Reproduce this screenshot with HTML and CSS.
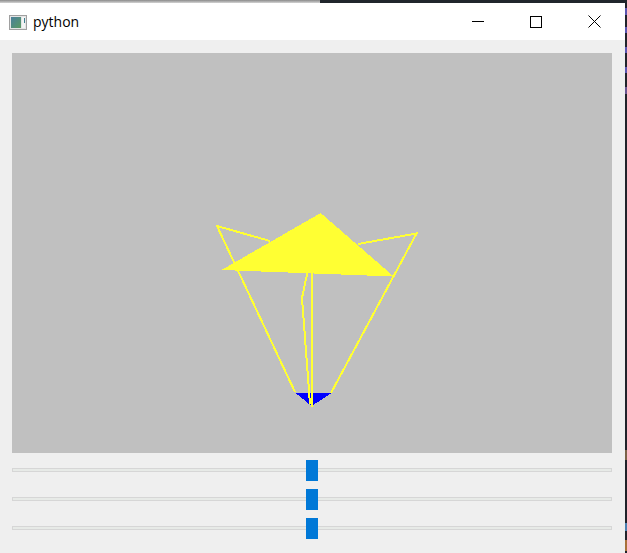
FILE: index.html
```html
<!DOCTYPE html>
<html lang="en">
<head>
<meta charset="utf-8">
<title>python</title>
<link rel="stylesheet" href="styles.css">
</head>
<body>
<div class="desktop-top"><div class="top-light"></div><div class="top-dark"></div></div>
<div class="main">
  <div class="window">
    <header class="titlebar">
      <svg class="app-icon" width="18" height="15" viewBox="0 0 18 15">
        <defs><linearGradient id="g" x1="0" y1="0" x2="1" y2="1"><stop offset="0" stop-color="#4a7f9c"/><stop offset="1" stop-color="#5a9a62"/></linearGradient></defs>
        <rect x="0.5" y="0.5" width="17" height="14" fill="#e4e4e4" stroke="#a0a0a0"/>
        <rect x="2" y="2" width="10" height="11" fill="url(#g)"/>
        <rect x="13" y="2" width="3" height="11" fill="#f2f4f4"/>
        <rect x="15" y="3" width="1" height="5" fill="#3f7f8f"/>
      </svg>
      <span class="title">python</span>
      <div class="controls">
        <div class="ctl"><svg width="12" height="12" viewBox="0 0 12 12"><path d="M0 5.5H12" stroke="#000" fill="none"/></svg></div>
        <div class="ctl"><svg width="12" height="12" viewBox="0 0 12 12"><rect x="0.5" y="0.5" width="11" height="11" stroke="#000" fill="none"/></svg></div>
        <div class="ctl"><svg width="13" height="13" viewBox="0 0 13 13"><path d="M0.5 0.5L12.5 12.5M12.5 0.5L0.5 12.5" stroke="#000" fill="none"/></svg></div>
      </div>
    </header>
    <div class="content">
      <div class="scene">
        <svg class="scene-svg" width="600" height="400" viewBox="12 53 600 400">
          <path class="wire" d="M270 241L217 226L295 392"/>
          <path class="wire" d="M358 244L416.5 233.5L331 393"/>
          <polygon class="blue" points="295,392.5 331,393.5 311.5,406"/>
          <polygon class="fill" points="320.7,213 221.5,270 393.8,276.5"/>
          <path class="wire" d="M307.5 272L302 298L310 404"/>
          <path class="wire" d="M312 272V407"/>
        </svg>
      </div>
      <div class="sliders">
        <div class="track"><div class="thumb"></div></div>
        <div class="track"><div class="thumb"></div></div>
        <div class="track"><div class="thumb"></div></div>
      </div>
    </div>
  </div>
  <div class="desktop-right"></div>
</div>
</body>
</html>
```
FILE: styles.css
```css
html, body {
  margin: 0;
  padding: 0;
  height: 100%;
  overflow: hidden;
  background: #20232a;
}
.desktop-top {
  display: flex;
  height: 3px;
}
.top-light { width: 320px; background: linear-gradient(#8a8a8a, #d4d4d4); }
.top-dark { flex: 1; background: #20262c; }
.main {
  display: flex;
  height: 550px;
}
.window {
  width: 625px;
  background: #efefef;
  display: flex;
  flex-direction: column;
}
.desktop-right {
  flex: 1;
  background: linear-gradient(to bottom,
    #20232a 5px, #5a55b0 5px, #5a55b0 12px, #20232a 12px,
    #20232a 24px, #5a55b0 24px, #5a55b0 30px, #20232a 30px,
    #20232a 44px, #5a55b0 44px, #5a55b0 50px, #20232a 50px,
    #20232a 64px, #5a55b0 64px, #5a55b0 70px, #20232a 70px,
    #20232a 84px, #6a5590 84px, #6a5590 91px, #20232a 91px,
    #20232a 447px, #7a6248 447px, #7a6248 457px, #20232a 457px,
    #20232a 520px, #4a7fb0 520px, #4a7fb0 528px, #20232a 528px,
    #20232a 537px, #a8703a 537px, #a8703a 548px, #20232a 548px);
}
.titlebar {
  height: 37px;
  background: #fff;
  display: flex;
  align-items: center;
  padding-left: 9px;
  flex-shrink: 0;
}
.app-icon { margin-right: 6px; margin-top: 1px; }
.title {
  font-family: "Open Sans", sans-serif;
  font-size: 14px;
  color: #000;
}
.controls {
  margin-left: auto;
  padding-right: 1px;
  display: flex;
}
.ctl {
  width: 58.5px;
  height: 37px;
  display: flex;
  align-items: center;
  justify-content: center;
}
.ctl svg { display: block; }
.content {
  padding: 13px 13px 0 12px;
}
.scene {
  width: 600px;
  height: 400px;
  background: #c0c0c0;
}
.scene-svg { display: block; }
.wire {
  fill: none;
  stroke: #ffff33;
  stroke-width: 2;
  shape-rendering: crispEdges;
}
.fill { fill: #ffff33; shape-rendering: crispEdges; }
.blue { fill: #0000ff; shape-rendering: crispEdges; }
.sliders {
  padding-top: 15px;
  display: flex;
  flex-direction: column;
  gap: 25px;
}
.track {
  position: relative;
  width: 598px;
  height: 2px;
  background: #e7eae7;
  border: 1px solid #d6d6d6;
}
.thumb {
  position: absolute;
  left: 293px;
  top: -9px;
  width: 12px;
  height: 21px;
  background: #0078d7;
}
```
